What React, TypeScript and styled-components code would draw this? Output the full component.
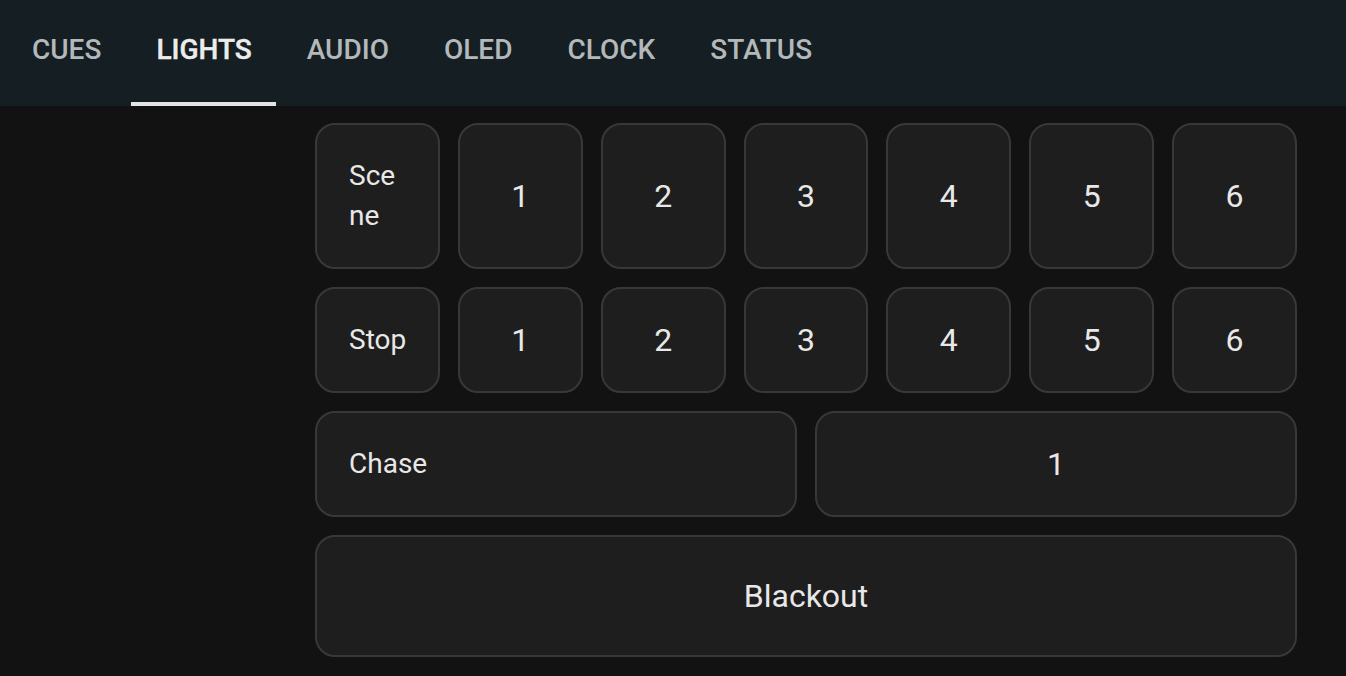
import React from "react";
import styled, { createGlobalStyle } from "styled-components";

const Global = createGlobalStyle`
  html, body { margin: 0; padding: 0; background: #121212; }
  body { font-family: Roboto, "Liberation Sans", sans-serif; }
  * { box-sizing: border-box; }
`;

const Page = styled.div`
  width: 1346px;
  height: 676px;
  overflow: hidden;
  background: #121212;
  display: flex;
  flex-direction: column;
`;

const TabBar = styled.nav`
  height: 106px;
  flex: none;
  background: #151e22;
  display: flex;
  align-items: stretch;
  padding-left: 7px;
  gap: 6px;
`;

const Tab = styled.div<{ $active?: boolean }>`
  position: relative;
  display: flex;
  align-items: center;
  padding: 0 24px 8px 25px;
  font-size: 28px;
  font-weight: 500;
  letter-spacing: 0;
  text-transform: uppercase;
  color: ${(p) => (p.$active ? "#ececec" : "#b3b8ba")};
  -webkit-text-stroke: ${(p) => (p.$active ? "0.4px #ececec" : "0")};
  &::after {
    content: "";
    display: ${(p) => (p.$active ? "block" : "none")};
    position: absolute;
    left: 0;
    right: 0;
    bottom: 0;
    height: 4px;
    background: #e4e4e4;
  }
`;

const Content = styled.main`
  display: flex;
  flex-direction: column;
  gap: 18px;
  padding: 17px 49px 0 315px;
`;

const Row = styled.div<{ $cols: number }>`
  display: grid;
  grid-template-columns: repeat(${(p) => p.$cols}, 1fr);
  gap: 18px;
`;

const Pad = styled.button<{ $label?: boolean; $big?: boolean }>`
  min-height: ${(p) => (p.$big ? "122px" : "106px")};
  background: #1e1e1e;
  border: 2px solid #383838;
  border-radius: 20px;
  color: #e8e8e8;
  font-family: Roboto, "Liberation Sans", sans-serif;
  font-size: ${(p) => (p.$label ? "28px" : "32px")};
  line-height: 40px;
  padding: ${(p) => (p.$label ? "31px 29px 31px 32px" : "31px 16px")};
  text-align: ${(p) => (p.$label ? "left" : "center")};
  word-break: break-all;
  cursor: pointer;
`;

const tabs = ["Cues", "Lights", "Audio", "OLED", "Clock", "Status"];

export default function App() {
  return (
    <Page>
      <Global />
      <TabBar>
        {tabs.map((t) => (
          <Tab key={t} $active={t === "Lights"}>
            {t}
          </Tab>
        ))}
      </TabBar>
      <Content>
        <Row $cols={7}>
          <Pad $label>Scene</Pad>
          {[1, 2, 3, 4, 5, 6].map((n) => (
            <Pad key={n}>{n}</Pad>
          ))}
        </Row>
        <Row $cols={7}>
          <Pad $label>Stop</Pad>
          {[1, 2, 3, 4, 5, 6].map((n) => (
            <Pad key={n}>{n}</Pad>
          ))}
        </Row>
        <Row $cols={2}>
          <Pad $label>Chase</Pad>
          <Pad>1</Pad>
        </Row>
        <Row $cols={1}>
          <Pad $big>Blackout</Pad>
        </Row>
      </Content>
    </Page>
  );
}
